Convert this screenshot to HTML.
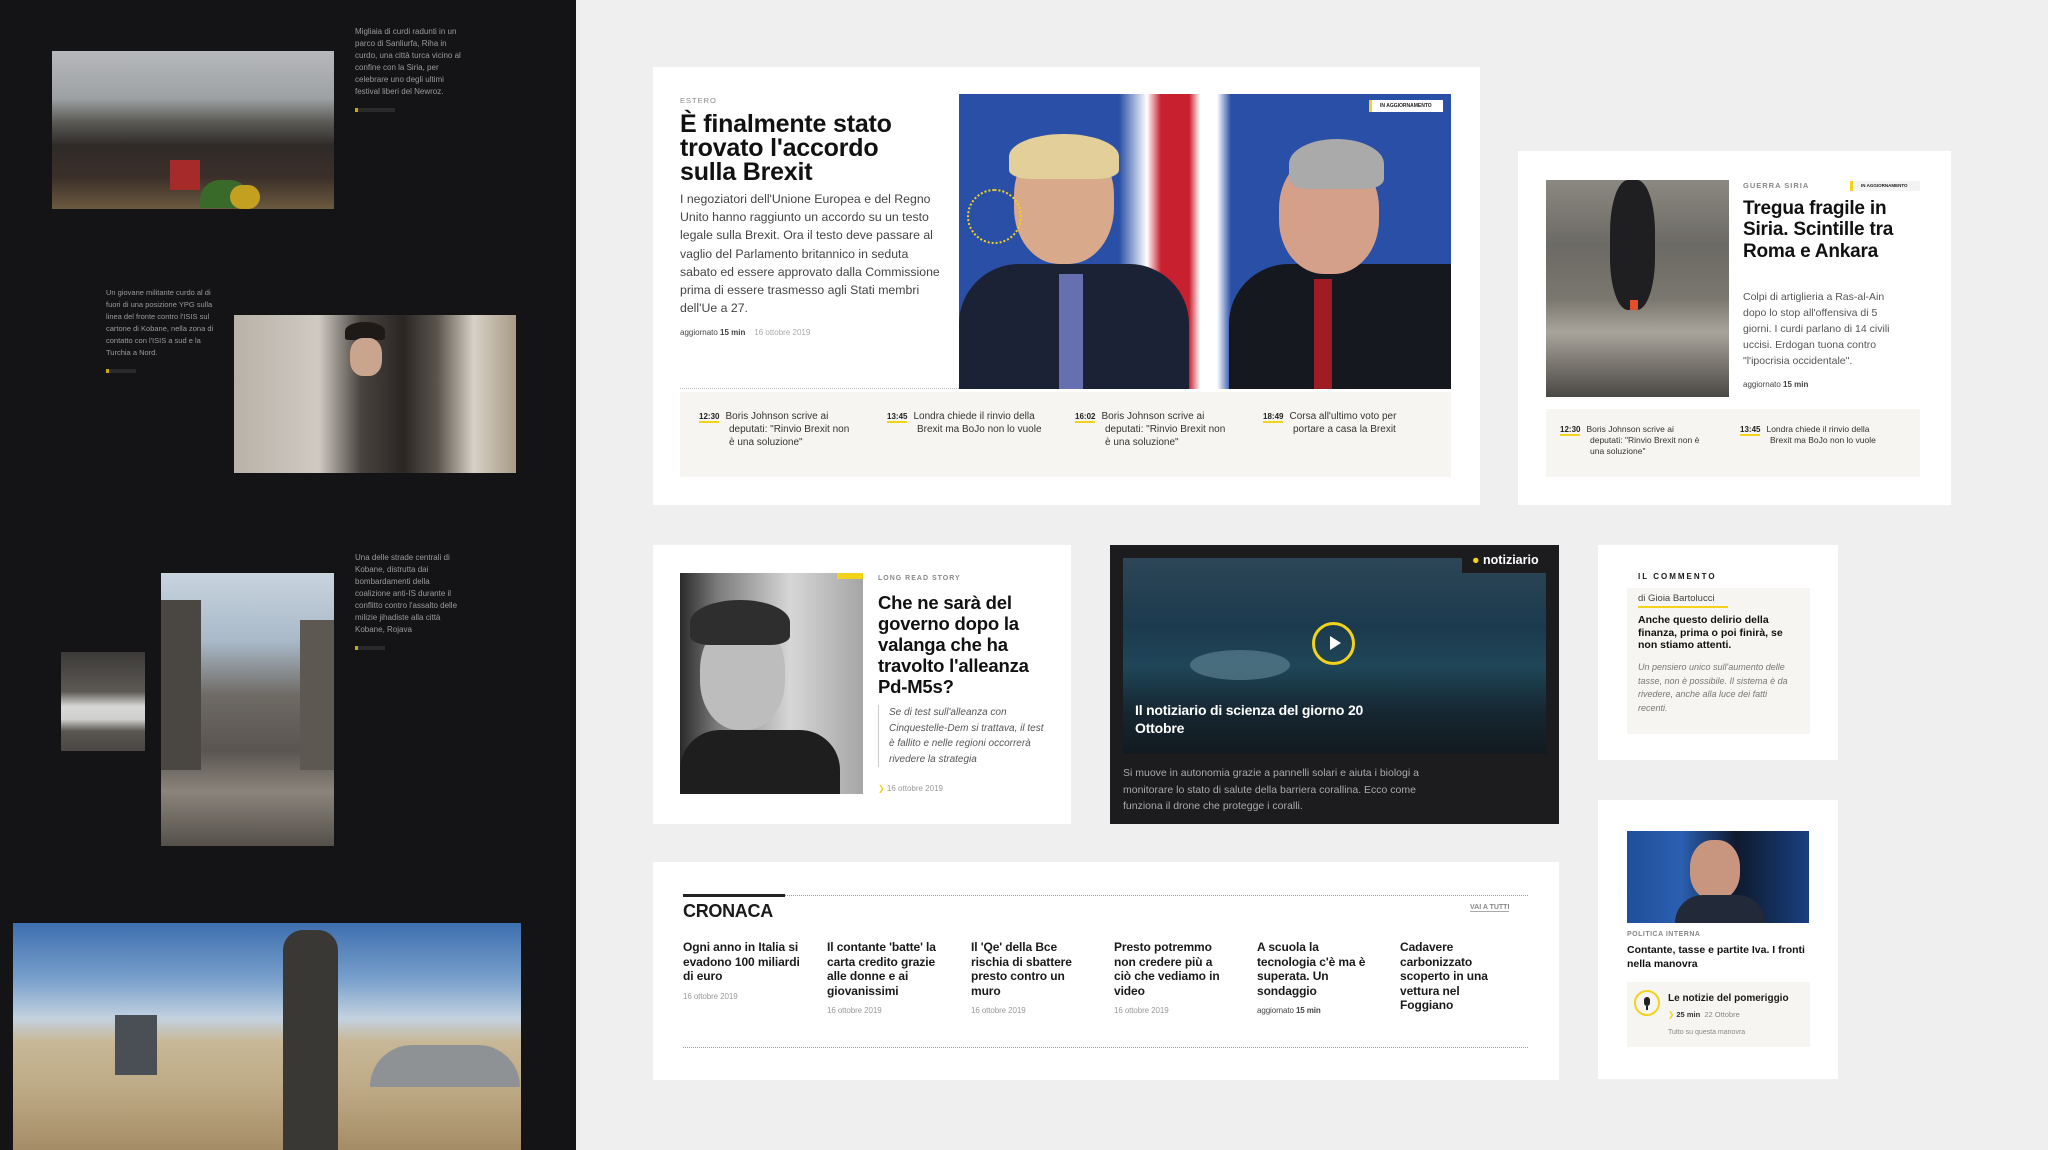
<!DOCTYPE html>
<html><head><meta charset="utf-8"><style>
*{margin:0;padding:0;box-sizing:border-box}
body{width:2048px;height:1150px;overflow:hidden;background:#efefef;font-family:"Liberation Sans",sans-serif;position:relative;color:#1a1a1a}
.a{position:absolute}
.dark{left:0;top:0;width:576px;height:1150px;background:#141416}
.cap{color:#9a9a9a;font-size:8px;line-height:12px}
.card{background:#fff}
.h{font-weight:bold;letter-spacing:-0.2px;color:#111}
.kick{font-size:7.5px;letter-spacing:1px;color:#888;font-weight:bold}
.strip{background:#f6f5f1}
.li{font-size:10px;line-height:13px;color:#333}
.li b{font-size:8px;border-bottom:2px solid #f2d21b;color:#222;margin-right:6px}
.date{font-size:8px;color:#999}
.cr{font-size:12px;line-height:14.5px;font-weight:bold;letter-spacing:-0.1px;width:118px}
</style></head><body>
<div class="a dark"></div>
<!-- crowd -->
<div class="a" style="left:52px;top:51px;width:282px;height:158px;background:linear-gradient(180deg,#b6b8bb 0%,#9ea1a4 30%,#5a5a55 45%,#2f2a28 60%,#3b2f2a 80%,#6b5a3e 100%)"></div>
<div class="a" style="left:200px;top:180px;width:50px;height:28px;background:#3a6a2a;border-radius:20px 20px 0 0"></div>
<div class="a" style="left:230px;top:185px;width:30px;height:24px;background:#c4a020;border-radius:14px"></div>
<div class="a" style="left:170px;top:160px;width:30px;height:30px;background:#a52a2a"></div>
<div class="a cap" style="left:355px;top:26px;width:110px">Migliaia di curdi radunti in un parco di Sanliurfa, Riha in curdo, una città turca vicino al confine con la Siria, per celebrare uno degli ultimi festival liberi del Newroz.</div>
<div class="a" style="left:355px;top:108px;width:40px;height:4px;border-left:3px solid #c7a720;background:#2a2a2a"></div>
<!-- soldier -->
<div class="a" style="left:234px;top:315px;width:282px;height:158px;background:linear-gradient(90deg,#b8b2a8 0%,#cfcac2 30%,#4a4440 45%,#2a2624 60%,#5a544c 72%,#d7d1c7 85%,#a89a85 100%)"></div>
<div class="a" style="left:345px;top:322px;width:40px;height:18px;background:#1e1a18;border-radius:50% 50% 10% 10%"></div>
<div class="a" style="left:350px;top:338px;width:32px;height:38px;background:#c9a58e;border-radius:40%"></div>
<div class="a cap" style="left:106px;top:287px;width:116px;font-size:7.5px">Un giovane militante curdo al di fuori di una posizione YPG sulla linea del fronte contro l'ISIS sul cartone di Kobane, nella zona di contatto con l'ISIS a sud e la Turchia a Nord.</div>
<div class="a" style="left:106px;top:369px;width:30px;height:4px;border-left:3px solid #c7a720;background:#2a2a2a"></div>
<!-- ruins -->
<div class="a" style="left:161px;top:573px;width:173px;height:273px;background:linear-gradient(180deg,#c8d4de 0%,#a9b9c8 25%,#6e6a64 45%,#5a5550 65%,#8a847c 80%,#55504a 100%)"></div>
<div class="a" style="left:161px;top:600px;width:40px;height:170px;background:#4a4642"></div>
<div class="a" style="left:300px;top:620px;width:34px;height:150px;background:#5e5852"></div>
<div class="a" style="left:61px;top:652px;width:84px;height:99px;background:linear-gradient(180deg,#3c3a38 0%,#5c5955 40%,#d8d8d6 55%,#cfcfcd 68%,#5a5652 80%,#4a4744 100%)"></div>
<div class="a cap" style="left:355px;top:552px;width:112px">Una delle strade centrali di Kobane, distrutta dai bombardamenti della coalizione anti-IS durante il conflitto contro l'assalto delle milizie jihadiste alla città Kobane, Rojava</div>
<div class="a" style="left:355px;top:646px;width:30px;height:4px;border-left:3px solid #c7a720;background:#2a2a2a"></div>
<!-- camp -->
<div class="a" style="left:13px;top:923px;width:508px;height:227px;background:linear-gradient(180deg,#3d6fae 0%,#7aa0cc 25%,#c3d2e0 42%,#c8b898 52%,#bca883 75%,#a48c66 100%)"></div>
<div class="a" style="left:370px;top:1045px;width:150px;height:42px;background:#8f9294;border-radius:50px 50px 0 0"></div>
<div class="a" style="left:283px;top:930px;width:55px;height:220px;background:#3a3835;border-radius:20px 20px 0 0"></div>
<div class="a" style="left:115px;top:1015px;width:42px;height:60px;background:#4a4e55"></div>

<!-- Card 1 -->
<div class="a card" style="left:653px;top:67px;width:827px;height:438px"></div>
<div class="a kick" style="left:680px;top:96px;font-weight:normal">ESTERO</div>
<div class="a h" style="left:680px;top:112px;width:245px;font-size:25px;line-height:24px">È finalmente stato trovato l'accordo sulla Brexit</div>
<div class="a" style="left:680px;top:190px;width:260px;font-size:12.3px;line-height:18.2px;color:#444">I negoziatori dell'Unione Europea e del Regno Unito hanno raggiunto un accordo su un testo legale sulla Brexit. Ora il testo deve passare al vaglio del Parlamento britannico in seduta sabato ed essere approvato dalla Commissione prima di essere trasmesso agli Stati membri dell'Ue a 27.</div>
<div class="a" style="left:680px;top:328px;font-size:8px;color:#444">aggiornato <b>15 min</b> &nbsp;&nbsp;&nbsp;<span style="color:#aaa">16 ottobre 2019</span></div>
<div class="a" style="left:959px;top:94px;width:492px;height:295px;background:#2a4fa6;overflow:hidden">
 <div class="a" style="left:160px;top:0;width:140px;height:295px;background:linear-gradient(90deg,#2a4fa6 0%,#fff 20%,#c8202e 30%,#c8202e 50%,#fff 58%,#fff 70%,#2a4fa6 80%)"></div>
 <div class="a" style="left:0;top:170px;width:230px;height:125px;background:#1c2236;border-radius:60px 60px 0 0"></div>
 <div class="a" style="left:55px;top:45px;width:100px;height:125px;background:#d9a98c;border-radius:45%"></div>
 <div class="a" style="left:50px;top:40px;width:110px;height:45px;background:#e2cf9a;border-radius:50% 50% 20% 20%"></div>
 <div class="a" style="left:100px;top:180px;width:24px;height:115px;background:#6670b0"></div>
 <div class="a" style="left:270px;top:170px;width:222px;height:125px;background:#161820;border-radius:60px 0 0 0"></div>
 <div class="a" style="left:320px;top:60px;width:100px;height:120px;background:#d5a08a;border-radius:45%"></div>
 <div class="a" style="left:330px;top:45px;width:95px;height:50px;background:#aaa;border-radius:50% 50% 20% 20%"></div>
 <div class="a" style="left:355px;top:185px;width:18px;height:110px;background:#a01c24"></div>
 <div class="a" style="left:8px;top:95px;width:55px;height:55px;border:2px dotted #f2d21b;border-radius:50%"></div>
 <div class="a" style="left:410px;top:6px;width:74px;height:12px;background:#fff;font-size:5px;line-height:12px;padding-left:8px;font-weight:bold;border-left:3px solid #f2d21b">IN AGGIORNAMENTO</div>
</div>
<div class="a" style="left:680px;top:388px;width:279px;border-top:1px dotted #bbb"></div>
<div class="a strip" style="left:680px;top:392px;width:771px;height:85px"></div>
<div class="a li" style="left:699px;top:410px;width:170px"><b>12:30</b>Boris Johnson scrive ai<br><span style="margin-left:30px"></span>deputati: "Rinvio Brexit non<br><span style="margin-left:30px"></span>è una soluzione"</div>
<div class="a li" style="left:887px;top:410px;width:180px"><b>13:45</b>Londra chiede il rinvio della<br><span style="margin-left:30px"></span>Brexit ma BoJo non lo vuole</div>
<div class="a li" style="left:1075px;top:410px;width:180px"><b>16:02</b>Boris Johnson scrive ai<br><span style="margin-left:30px"></span>deputati: "Rinvio Brexit non<br><span style="margin-left:30px"></span>è una soluzione"</div>
<div class="a li" style="left:1263px;top:410px;width:180px"><b>18:49</b>Corsa all'ultimo voto per<br><span style="margin-left:30px"></span>portare a casa la Brexit</div>

<!-- Card 2 -->
<div class="a card" style="left:1518px;top:151px;width:433px;height:354px"></div>
<div class="a" style="left:1546px;top:180px;width:183px;height:217px;background:linear-gradient(180deg,#8a8880 0%,#6c6a64 30%,#7a776f 55%,#a9a49b 70%,#4a4844 100%)"></div>
<div class="a" style="left:1610px;top:180px;width:45px;height:130px;background:#1f1f22;border-radius:40%"></div>
<div class="a" style="left:1630px;top:300px;width:8px;height:10px;background:#e0502c"></div>
<div class="a kick" style="left:1743px;top:181px">GUERRA SIRIA</div>
<div class="a" style="left:1850px;top:181px;width:70px;height:10px;background:#f3f3f3;font-size:4.5px;line-height:10px;padding-left:8px;font-weight:bold;border-left:3px solid #f2d21b">IN AGGIORNAMENTO</div>
<div class="a h" style="left:1743px;top:198px;width:160px;font-size:19px;line-height:21.3px">Tregua fragile in Siria. Scintille tra Roma e Ankara</div>
<div class="a" style="left:1743px;top:289px;width:160px;font-size:10.5px;line-height:16px;color:#555">Colpi di artiglieria a Ras-al-Ain dopo lo stop all'offensiva di 5 giorni. I curdi parlano di 14 civili uccisi. Erdogan tuona contro "l'ipocrisia occidentale".</div>
<div class="a" style="left:1743px;top:380px;font-size:8px;color:#444">aggiornato <b>15 min</b></div>
<div class="a strip" style="left:1546px;top:409px;width:374px;height:68px"></div>
<div class="a li" style="left:1560px;top:424px;width:170px;font-size:8.5px;line-height:11px"><b>12:30</b>Boris Johnson scrive ai<br><span style="margin-left:30px"></span>deputati: "Rinvio Brexit non è<br><span style="margin-left:30px"></span>una soluzione"</div>
<div class="a li" style="left:1740px;top:424px;width:170px;font-size:8.5px;line-height:11px"><b>13:45</b>Londra chiede il rinvio della<br><span style="margin-left:30px"></span>Brexit ma BoJo non lo vuole</div>

<!-- Card 3 -->
<div class="a card" style="left:653px;top:545px;width:418px;height:279px"></div>
<div class="a" style="left:680px;top:573px;width:183px;height:221px;background:linear-gradient(90deg,#2a2a2a 0%,#7a7a7a 20%,#d6d6d6 60%,#a5a5a5 100%)"></div>
<div class="a" style="left:700px;top:620px;width:85px;height:110px;background:#bdbdbd;border-radius:45%"></div>
<div class="a" style="left:690px;top:600px;width:100px;height:45px;background:#2e2e2e;border-radius:50% 50% 20% 20%"></div>
<div class="a" style="left:680px;top:730px;width:160px;height:64px;background:#1e1e1e;border-radius:40px 40px 0 0"></div>
<div class="a" style="left:837px;top:573px;width:26px;height:6px;background:#f2d21b"></div>
<div class="a kick" style="left:878px;top:575px;font-size:7px">LONG READ STORY</div>
<div class="a h" style="left:878px;top:592px;width:175px;font-size:18.5px;line-height:21px">Che ne sarà del governo dopo la valanga che ha travolto l'alleanza Pd-M5s?</div>
<div class="a" style="left:878px;top:705px;width:170px;font-size:10px;line-height:15.5px;color:#555;font-style:italic;border-left:1px solid #ccc;padding-left:10px">Se di test sull'alleanza con Cinquestelle-Dem si trattava, il test è fallito e nelle regioni occorrerà rivedere la strategia</div>
<div class="a date" style="left:878px;top:784px"><span style="color:#f2d21b">❯</span> 16 ottobre 2019</div>

<!-- Card 4 dark -->
<div class="a" style="left:1110px;top:545px;width:449px;height:279px;background:#1c1c1e"></div>
<div class="a" style="left:1123px;top:558px;width:423px;height:196px;background:linear-gradient(180deg,#2c4656 0%,#1c3a4e 35%,#1f4658 55%,#15252f 80%,#121a20 100%)"></div>
<div class="a" style="left:1190px;top:650px;width:100px;height:30px;background:#5a7f8e;border-radius:50%;opacity:.7"></div>
<div class="a" style="left:1462px;top:549px;width:97px;height:24px;background:#1c1c1e;color:#fff;font-size:12.5px;font-weight:bold;line-height:22px;padding-left:10px"><span style="color:#f2d21b">●</span> notiziario</div>
<div class="a" style="left:1312px;top:622px;width:43px;height:43px;border:3px solid #f2d21b;border-radius:50%"></div>
<div class="a" style="left:1330px;top:636px;width:0;height:0;border-left:11px solid #fff;border-top:7px solid transparent;border-bottom:7px solid transparent"></div>
<div class="a" style="left:1135px;top:702px;width:270px;color:#fff;font-size:14px;line-height:17.5px;font-weight:bold;letter-spacing:-0.2px">Il notiziario di scienza del giorno 20 Ottobre</div>
<div class="a" style="left:1123px;top:765px;width:330px;color:#aaa;font-size:10.5px;line-height:16.5px">Si muove in autonomia grazie a pannelli solari e aiuta i biologi a monitorare lo stato di salute della barriera corallina. Ecco come funziona il drone che protegge i coralli.</div>

<!-- Card 5 -->
<div class="a card" style="left:1598px;top:545px;width:240px;height:215px"></div>
<div class="a" style="left:1638px;top:572px;font-size:8px;font-weight:bold;letter-spacing:2px">IL COMMENTO</div>
<div class="a strip" style="left:1627px;top:588px;width:183px;height:146px"></div>
<div class="a" style="left:1638px;top:593px;font-size:9.5px;color:#444;border-bottom:2px solid #f2d21b;padding-bottom:2px;width:90px">di Gioia Bartolucci</div>
<div class="a h" style="left:1638px;top:614px;width:150px;font-size:10.5px;line-height:12.5px;letter-spacing:0">Anche questo delirio della finanza, prima o poi finirà, se non stiamo attenti.</div>
<div class="a" style="left:1638px;top:661px;width:150px;font-size:9px;line-height:13.5px;color:#777;font-style:italic">Un pensiero unico sull'aumento delle tasse, non è possibile. Il sistema è da rivedere, anche alla luce dei fatti recenti.</div>

<!-- Card 6 -->
<div class="a card" style="left:1598px;top:800px;width:240px;height:279px"></div>
<div class="a" style="left:1627px;top:831px;width:182px;height:92px;background:linear-gradient(90deg,#1f4f9a 0%,#2b5fb0 30%,#0e1a2e 60%,#1a3f80 100%)"></div>
<div class="a" style="left:1690px;top:840px;width:50px;height:60px;background:#c8967e;border-radius:45%"></div>
<div class="a" style="left:1675px;top:895px;width:90px;height:28px;background:#222a3a;border-radius:30px 30px 0 0"></div>
<div class="a kick" style="left:1627px;top:931px;font-size:7px;letter-spacing:.5px">POLITICA INTERNA</div>
<div class="a h" style="left:1627px;top:943px;width:190px;font-size:10.5px;line-height:14px;letter-spacing:0">Contante, tasse e partite Iva. I fronti nella manovra</div>
<div class="a strip" style="left:1627px;top:982px;width:183px;height:65px"></div>
<div class="a" style="left:1634px;top:990px;width:26px;height:26px;border:2px solid #f2d21b;border-radius:50%"></div>
<div class="a" style="left:1644px;top:997px;width:6px;height:9px;background:#222;border-radius:3px"></div>
<div class="a" style="left:1646px;top:1006px;width:2px;height:4px;background:#222"></div>
<div class="a" style="left:1668px;top:993px;font-size:10px;font-weight:bold">Le notizie del pomeriggio</div>
<div class="a" style="left:1668px;top:1010px;font-size:7.5px;color:#888"><span style="color:#f2d21b">❯</span> <b style="color:#333">25 min</b> &nbsp;22 Ottobre</div>
<div class="a" style="left:1668px;top:1029px;font-size:7px;color:#888">Tutto su questa manovra</div>

<!-- Cronaca -->
<div class="a card" style="left:653px;top:862px;width:906px;height:218px"></div>
<div class="a" style="left:683px;top:895px;width:845px;border-top:1px dotted #999"></div>
<div class="a" style="left:683px;top:894px;width:102px;height:3px;background:#222"></div>
<div class="a" style="left:683px;top:901px;font-size:18px;font-weight:bold;letter-spacing:-0.3px">CRONACA</div>
<div class="a" style="left:1470px;top:904px;font-size:7px;color:#888;font-weight:bold;border-bottom:1px solid #aaa">VAI A TUTTI</div>
<div class="a cr" style="left:683px;top:940px">Ogni anno in Italia si evadono 100 miliardi di euro<div class="date" style="font-weight:normal;margin-top:6px">16 ottobre 2019</div></div>
<div class="a cr" style="left:827px;top:940px">Il contante 'batte' la carta credito grazie alle donne e ai giovanissimi<div class="date" style="font-weight:normal;margin-top:6px">16 ottobre 2019</div></div>
<div class="a cr" style="left:971px;top:940px;width:112px">Il 'Qe' della Bce rischia di sbattere presto contro un muro<div class="date" style="font-weight:normal;margin-top:6px">16 ottobre 2019</div></div>
<div class="a cr" style="left:1114px;top:940px;width:112px">Presto potremmo non credere più a ciò che vediamo in video<div class="date" style="font-weight:normal;margin-top:6px">16 ottobre 2019</div></div>
<div class="a cr" style="left:1257px;top:940px;width:110px">A scuola la tecnologia c'è ma è superata. Un sondaggio<div class="date" style="font-weight:normal;margin-top:6px;color:#444">aggiornato <b>15 min</b></div></div>
<div class="a cr" style="left:1400px;top:940px;width:100px">Cadavere carbonizzato scoperto in una vettura nel Foggiano</div>
<div class="a" style="left:683px;top:1047px;width:845px;border-top:1px dotted #999"></div>
</body></html>
